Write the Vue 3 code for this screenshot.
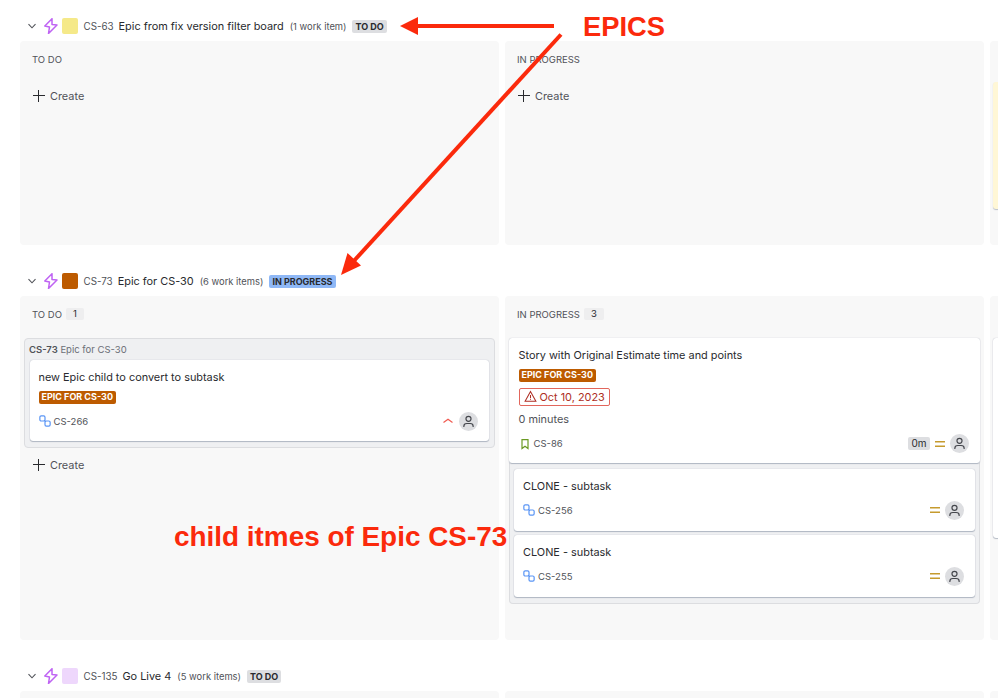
<script setup>
const epicBolt = 'M8 .7.8 8l4.700 1-1 6.500L13 7l-5-.5z'
</script>

<template>
  <div class="page">
    <section class="lane lane-first">
      <header class="lane-head">
        <svg class="chev" viewBox="0 0 10 10"><path d="M1.500 3.200 5 6.800l3.500-3.600" /></svg>
        <svg class="bolt" viewBox="0 0 14 16"><path :d="epicBolt" /></svg>
        <span class="swatch yellow"></span>
        <span class="epic-key">CS-63</span>
        <span class="epic-name">Epic from fix version filter board</span>
        <span class="count">(1 work item)</span>
        <span class="status grey">TO DO</span>
      </header>
      <div class="columns short">
        <div class="col">
          <div class="col-head"><span>TO DO</span></div>
          <div class="create"><span class="plus"></span>Create</div>
        </div>
        <div class="col">
          <div class="col-head"><span>IN PROGRESS</span></div>
          <div class="create"><span class="plus"></span>Create</div>
        </div>
        <div class="col">
          <div class="peek yellow-peek"></div>
        </div>
      </div>
    </section>

    <section class="lane lane-second">
      <header class="lane-head">
        <svg class="chev" viewBox="0 0 10 10"><path d="M1.500 3.200 5 6.800l3.500-3.600" /></svg>
        <svg class="bolt" viewBox="0 0 14 16"><path :d="epicBolt" /></svg>
        <span class="swatch orange"></span>
        <span class="epic-key">CS-73</span>
        <span class="epic-name">Epic for CS-30</span>
        <span class="count">(6 work items)</span>
        <span class="status blue">IN PROGRESS</span>
      </header>
      <div class="columns tall">
        <div class="col">
          <div class="col-head"><span>TO DO</span><span class="col-num">1</span></div>
          <div class="group">
            <div class="group-title"><b>CS-73</b> Epic for CS-30</div>
            <div class="card">
              <div class="card-title">new Epic child to convert to subtask</div>
              <span class="lozenge">EPIC FOR CS-30</span>
              <div class="card-foot">
                <svg class="type" viewBox="0 0 14 14"><rect x="1" y="1" width="6" height="6" rx="1.600" /><rect x="7" y="7" width="6" height="6" rx="1.600" /><path d="M6 6 8 8" /></svg>
                <span class="key">CS-266</span>
                <svg class="high" viewBox="0 0 12 8"><path d="M1.500 5.500 6 2.200l4.500 3.300" /></svg>
                <svg class="avatar" viewBox="0 0 18 18"><circle cx="9" cy="9" r="9" /><circle class="fig" cx="9" cy="6.500" r="2.400" /><path class="fig" d="M4.600 14.200v-.7c0-1.700 1.200-2.600 2.800-2.600h3.200c1.600 0 2.800.9 2.800 2.600v.7" /></svg>
              </div>
            </div>
          </div>
          <div class="create create-after"><span class="plus"></span>Create</div>
        </div>

        <div class="col">
          <div class="col-head"><span>IN PROGRESS</span><span class="col-num">3</span></div>
          <div class="stack">
            <div class="card parent">
              <div class="card-title">Story with Original Estimate time and points</div>
              <span class="lozenge">EPIC FOR CS-30</span>
              <div class="due">
                <svg viewBox="0 0 14 14"><path d="M7 1.600 1.200 12h11.600z" /><path d="M7 5.400v3.400M7 9.900v.8" /></svg>
                Oct 10, 2023
              </div>
              <div class="estimate">0 minutes</div>
              <div class="card-foot">
                <svg class="type story" viewBox="0 0 14 14"><path d="M3.500 1.800h7v10.400L7 9.600l-3.500 2.600z" /></svg>
                <span class="key">CS-86</span>
                <span class="time">0m</span>
                <svg class="medium" viewBox="0 0 12 8"><path d="M1 1.800h10M1 6.200h10" /></svg>
                <svg class="avatar" viewBox="0 0 18 18"><circle cx="9" cy="9" r="9" /><circle class="fig" cx="9" cy="6.500" r="2.400" /><path class="fig" d="M4.600 14.200v-.7c0-1.700 1.200-2.600 2.800-2.600h3.200c1.600 0 2.800.9 2.800 2.600v.7" /></svg>
              </div>
            </div>
            <div class="children">
              <div class="card child">
                <div class="card-title">CLONE - subtask</div>
                <div class="card-foot">
                  <svg class="type" viewBox="0 0 14 14"><rect x="1" y="1" width="6" height="6" rx="1.600" /><rect x="7" y="7" width="6" height="6" rx="1.600" /><path d="M6 6 8 8" /></svg>
                  <span class="key">CS-256</span>
                  <svg class="medium push" viewBox="0 0 12 8"><path d="M1 1.800h10M1 6.200h10" /></svg>
                  <svg class="avatar" viewBox="0 0 18 18"><circle cx="9" cy="9" r="9" /><circle class="fig" cx="9" cy="6.500" r="2.400" /><path class="fig" d="M4.600 14.200v-.7c0-1.700 1.200-2.600 2.800-2.600h3.200c1.600 0 2.800.9 2.800 2.600v.7" /></svg>
                </div>
              </div>
              <div class="card child">
                <div class="card-title">CLONE - subtask</div>
                <div class="card-foot">
                  <svg class="type" viewBox="0 0 14 14"><rect x="1" y="1" width="6" height="6" rx="1.600" /><rect x="7" y="7" width="6" height="6" rx="1.600" /><path d="M6 6 8 8" /></svg>
                  <span class="key">CS-255</span>
                  <svg class="medium push" viewBox="0 0 12 8"><path d="M1 1.800h10M1 6.200h10" /></svg>
                  <svg class="avatar" viewBox="0 0 18 18"><circle cx="9" cy="9" r="9" /><circle class="fig" cx="9" cy="6.500" r="2.400" /><path class="fig" d="M4.600 14.200v-.7c0-1.700 1.200-2.600 2.800-2.600h3.200c1.600 0 2.800.9 2.800 2.600v.7" /></svg>
                </div>
              </div>
            </div>
          </div>
        </div>

        <div class="col">
          <div class="peek grey-peek"></div>
        </div>
      </div>
    </section>

    <section class="lane lane-third">
      <header class="lane-head">
        <svg class="chev" viewBox="0 0 10 10"><path d="M1.500 3.200 5 6.800l3.500-3.600" /></svg>
        <svg class="bolt" viewBox="0 0 14 16"><path :d="epicBolt" /></svg>
        <span class="swatch lilac"></span>
        <span class="epic-key">CS-135</span>
        <span class="epic-name">Go Live 4</span>
        <span class="count">(5 work items)</span>
        <span class="status grey">TO DO</span>
      </header>
      <div class="columns rest">
        <div class="col"></div>
        <div class="col"></div>
        <div class="col"></div>
      </div>
    </section>

    <svg class="arrows" viewBox="0 0 998 698">
      <path d="M554 26H416" />
      <path class="head" d="M400 26 418 17V35z" />
      <path d="M561 34.500 352 263" />
      <path class="head" d="M341 275 347.500 253 361 265.500z" />
    </svg>
    <div class="note note-epics">EPICS</div>
    <div class="note note-child">child itmes of Epic CS-73</div>
  </div>
</template>

<style>
html, body {
  margin: 0;
  background: #fff;
}
</style>

<style scoped>
.page {
  position: relative;
  width: 998px;
  height: 698px;
  overflow: hidden;
  background: #fff;
  font-family: Inter, "Liberation Sans", sans-serif;
  color: #292a2e;
}

.lane-first { padding-top: 15px; }
.lane-second { padding-top: 25px; }
.lane-third { padding-top: 25px; }

.lane-head {
  display: flex;
  align-items: center;
  height: 22px;
  padding-left: 27px;
  margin-bottom: 4px;
}

.chev {
  width: 10px;
  height: 10px;
  margin-right: 7px;
  fill: none;
  stroke: #505258;
  stroke-width: 1.100;
}

.bolt {
  width: 14px;
  height: 16px;
  margin-right: 4px;
  fill: none;
  stroke: #bf63f3;
  stroke-width: 1.500;
  stroke-linejoin: round;
}

.swatch {
  width: 15.500px;
  height: 15.500px;
  margin-right: 6px;
  border-radius: 2px;
}
.yellow { background: #f5e989; }
.orange { background: #bd5b00; }
.lilac { background: #eed7fc; }

.epic-key {
  font-size: 9.800px;
  color: #505258;
  margin-right: 5px;
}
.epic-name {
  font-size: 10.900px;
  margin-right: 6px;
}
.count {
  font-size: 9.400px;
  color: #505258;
  margin-right: 6px;
}

.status {
  font-size: 9px;
  font-weight: 700;
  line-height: 13px;
  padding: 0 3px;
  border-radius: 2px;
}
.grey { background: #dddee1; color: #292a2e; }
.blue { background: #8fb8f6; color: #292a2e; }

.columns {
  display: grid;
  grid-template-columns: 479px 479px 479px;
  column-gap: 6px;
  padding-left: 20px;
}
.short { height: 204px; }
.tall { height: 344px; }
.rest { height: 30px; }

.col {
  position: relative;
  background: #f8f8f8;
  border-radius: 4px;
  box-sizing: border-box;
}

.col-head {
  display: flex;
  align-items: center;
  gap: 4px;
  height: 36px;
  padding-left: 12px;
  font-size: 9.500px;
  color: #505258;
}
.col-num {
  background: #eeeeef;
  color: #292a2e;
  border-radius: 2px;
  padding: 0 7px;
  line-height: 12px;
}

.create {
  display: flex;
  align-items: center;
  gap: 5px;
  height: 20px;
  margin-top: 9px;
  padding-left: 13px;
  font-size: 10.900px;
  color: #505258;
}
.create-after { margin-top: 7px; }

.plus {
  position: relative;
  width: 12px;
  height: 12px;
  background:
    linear-gradient(#292a2e, #292a2e) center / 12px 1.200px no-repeat,
    linear-gradient(#292a2e, #292a2e) center / 1.200px 12px no-repeat;
}

.group {
  margin: 6px 4px 0;
  padding: 3px 5px 6px;
  background: #eff0f2;
  border: 1px solid #dcdde0;
  border-radius: 4px;
}
.group-title {
  font-size: 9.500px;
  line-height: 16px;
  margin-bottom: 2px;
  margin-left: -1px;
  color: #6b6e76;
}
.group-title b {
  font-weight: 600;
  color: #505258;
}

.card {
  background: #fff;
  border-radius: 3px;
  box-shadow: 0 1px 1px #091e4240, 0 0 1px #091e424f;
}
.group .card {
  padding: 10px 11px 0 8.500px;
  height: 81px;
  box-sizing: border-box;
}

.card-title {
  font-size: 10.900px;
  line-height: 14px;
  margin-bottom: 7px;
}

.lozenge {
  display: block;
  width: fit-content;
  background: #bd5b00;
  color: #fff;
  font-size: 9px;
  font-weight: 700;
  line-height: 12.500px;
  padding: 0 3px;
  border-radius: 2px;
}

.card-foot {
  display: flex;
  align-items: center;
  height: 20px;
  margin-top: 7.500px;
}

.type {
  width: 12px;
  height: 12px;
  margin-right: 3px;
  fill: none;
  stroke: #5a95f5;
  stroke-width: 1.400;
}
.story {
  stroke: #6a9a23;
}

.key {
  font-size: 9.500px;
  color: #505258;
  margin-right: auto;
}

.high {
  width: 12px;
  height: 8px;
  margin-right: 5px;
  fill: none;
  stroke: #f15b50;
  stroke-width: 1.200;
}

.medium {
  width: 12px;
  height: 8px;
  margin-right: 4px;
  fill: none;
  stroke: #c69b2e;
  stroke-width: 1.500;
}

.avatar {
  width: 19px;
  height: 19px;
  flex: none;
  fill: #dddee1;
}
.avatar .fig {
  fill: none;
  stroke: #44464c;
  stroke-width: 1.100;
}

.stack {
  margin: 6px 4px 0;
}

.parent {
  position: relative;
  z-index: 1;
  height: 125px;
  box-sizing: border-box;
  padding: 10px 11px 0 9.500px;
}
.parent .card-foot {
  margin-top: 8px;
}

.due {
  display: flex;
  align-items: center;
  gap: 3px;
  width: fit-content;
  height: 18px;
  margin-top: 6px;
  padding: 0 4px;
  box-sizing: border-box;
  border: 1px solid #e2665c;
  border-radius: 2px;
  font-size: 10.900px;
  color: #ae2e24;
}
.due svg {
  width: 13px;
  height: 13px;
  fill: none;
  stroke: #ae2e24;
  stroke-width: 1.100;
}

.estimate {
  font-size: 10.900px;
  line-height: 14px;
  margin-top: 6px;
  color: #505258;
}

.time {
  font-size: 10px;
  background: #dddee1;
  color: #292a2e;
  padding: 0 3.500px;
  line-height: 13px;
  border-radius: 2px;
  margin-right: 4px;
}

.children {
  padding: 6px 4px 6px;
  background: #eff0f2;
  border: 1px solid #dcdde0;
  border-top: 0;
  border-radius: 0 0 4px 4px;
  display: flex;
  flex-direction: column;
  gap: 4px;
}

.child {
  height: 62px;
  box-sizing: border-box;
  padding: 10px 11px 0 9px;
}
.child .card-title {
  margin-bottom: 0;
}
.child .card-foot {
  margin-top: 7px;
}
.push {
  margin-left: auto;
}

.peek {
  position: absolute;
  left: 3px;
  right: 0;
  border-radius: 3px;
}
.yellow-peek {
  top: 41px;
  height: 127px;
  background: #fff7d6;
  box-shadow: 0 1px 1px #091e4240;
}
.grey-peek {
  top: 42px;
  height: 200px;
  background: #fff;
  box-shadow: 0 1px 1px #091e4240, 0 0 1px #091e424f;
}

.arrows {
  position: absolute;
  inset: 0;
  width: 998px;
  height: 698px;
  fill: none;
  stroke: #fb2a0c;
  stroke-width: 4;
}
.arrows .head {
  fill: #fb2a0c;
  stroke: none;
}

.note {
  position: absolute;
  font-family: "Liberation Sans", Arial, sans-serif;
  font-weight: 700;
  color: #fb2a0c;
  white-space: nowrap;
}
.note-epics {
  left: 583px;
  top: 11px;
  font-size: 27.300px;
  line-height: 32px;
}
.note-child {
  left: 174px;
  top: 521px;
  font-size: 27.900px;
  line-height: 32px;
}
</style>
